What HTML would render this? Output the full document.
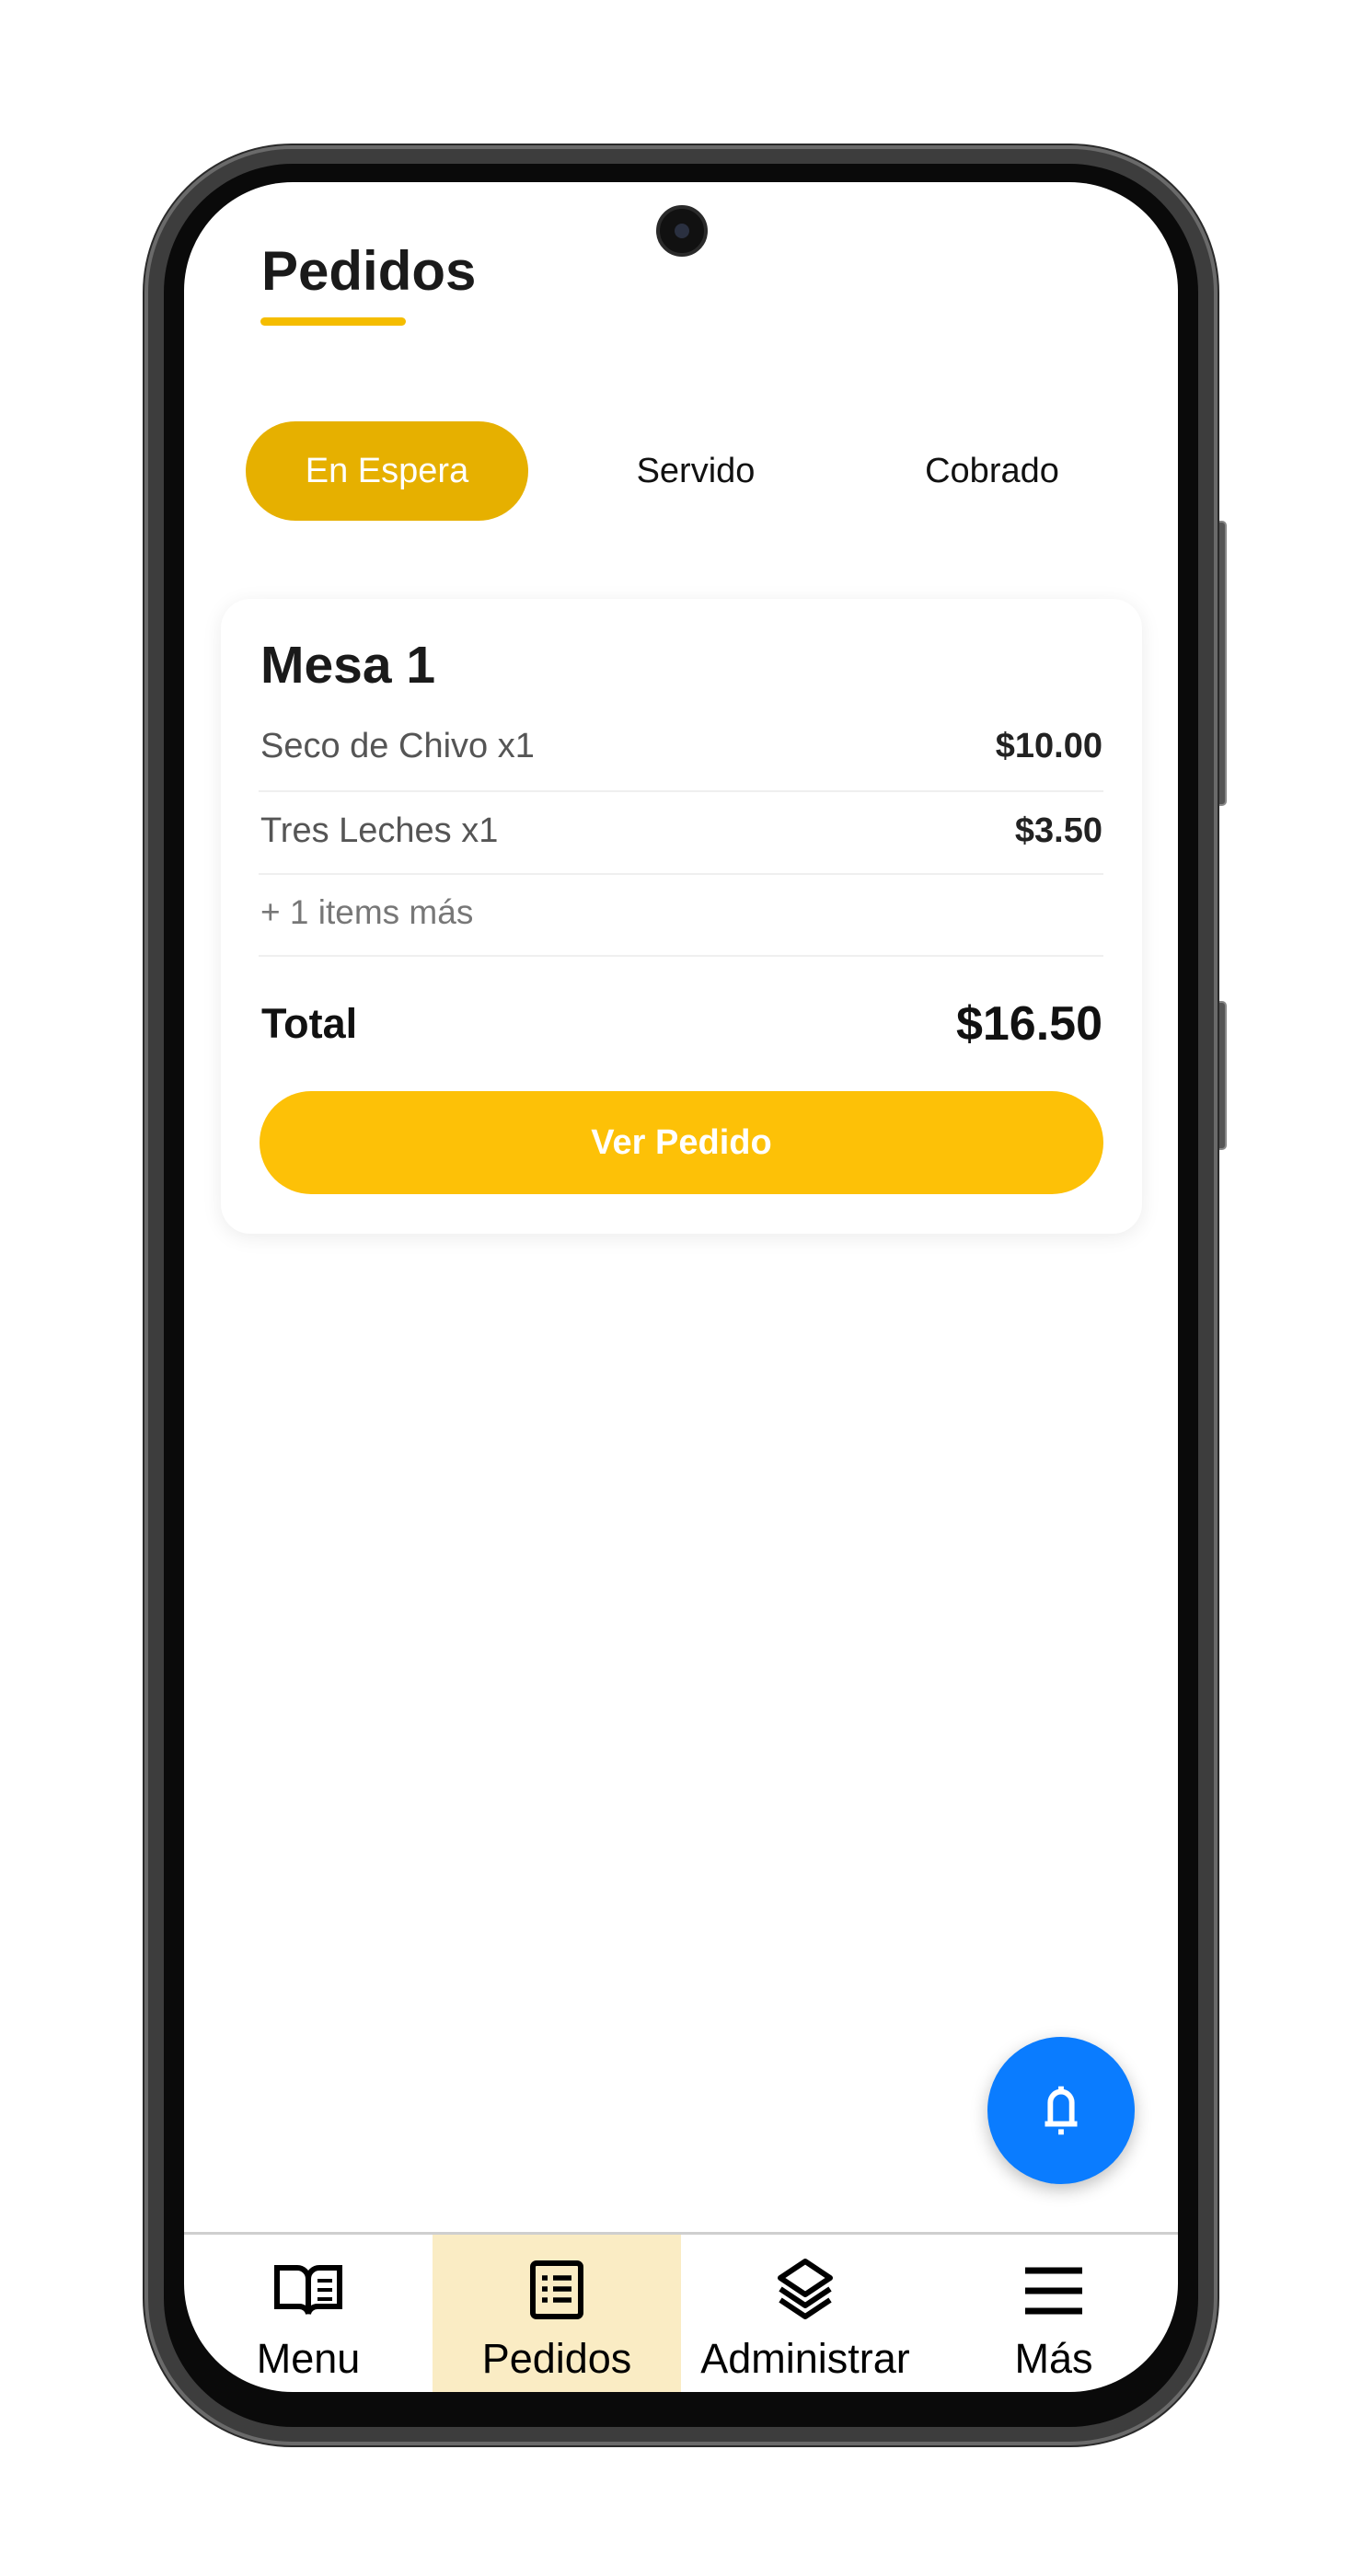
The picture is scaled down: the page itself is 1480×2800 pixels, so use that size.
<!DOCTYPE html>
<html><head><meta charset="utf-8"><style>
*{margin:0;padding:0;box-sizing:border-box}
body{width:1480px;height:2800px;background:#fff;position:relative;font-family:"Liberation Sans",Arial,sans-serif;overflow:hidden}
.abs{position:absolute}
.frame{left:157px;top:158px;width:1166px;height:2500px;border-radius:160px;background:#3d3d3d;border:4px solid #6a6a6a;box-shadow:0 0 0 2px #2a2a2a}
.bezel{left:178px;top:178px;width:1124px;height:2460px;border-radius:140px;background:#0a0a0a}
.screen{left:200px;top:198px;width:1080px;height:2402px;border-radius:118px;background:#fff;overflow:hidden}
.t{position:absolute;white-space:nowrap}
</style></head><body>
<div class="abs" style="left:1319px;top:566px;width:14px;height:310px;background:#555;border-radius:0 5px 5px 0;border:2px solid #888"></div>
<div class="abs" style="left:1319px;top:1088px;width:14px;height:162px;background:#555;border-radius:0 5px 5px 0;border:2px solid #888"></div>
<div class="abs" style="left:155px;top:445px;width:10px;height:28px;background:#999"></div>
<div class="abs" style="left:155px;top:1030px;width:10px;height:28px;background:#999"></div>
<div class="abs frame"></div>
<div class="abs bezel"></div>
<div class="abs screen">
  <div class="t" style="left:84px;top:62px;font-size:60px;font-weight:bold;color:#1a1a1a">Pedidos</div>
  <div class="abs" style="left:83px;top:147px;width:158px;height:9px;border-radius:5px;background:#f5bd00"></div>
  <div class="abs" style="left:67px;top:260px;width:307px;height:108px;border-radius:54px;background:#e6b000"></div>
  <div class="t" style="left:67px;top:260px;width:307px;line-height:108px;text-align:center;font-size:38px;color:#fff">En Espera</div>
  <div class="t" style="left:456px;top:260px;width:200px;line-height:108px;text-align:center;font-size:38px;color:#111">Servido</div>
  <div class="t" style="left:778px;top:260px;width:200px;line-height:108px;text-align:center;font-size:38px;color:#111">Cobrado</div>

  <div class="abs" style="left:40px;top:453px;width:1001px;height:690px;border-radius:32px;background:#fff;box-shadow:0 4px 22px rgba(0,0,0,0.08)"></div>
  <div class="t" style="left:83px;top:492px;font-size:57px;font-weight:bold;color:#1a1a1a">Mesa 1</div>
  <div class="t" style="left:83px;top:592px;font-size:38px;color:#555">Seco de Chivo x1</div>
  <div class="t" style="right:82px;top:592px;font-size:38px;font-weight:bold;color:#222">$10.00</div>
  <div class="abs" style="left:81px;top:661px;width:918px;height:2px;background:#efefef"></div>
  <div class="t" style="left:83px;top:684px;font-size:38px;color:#555">Tres Leches x1</div>
  <div class="t" style="right:82px;top:684px;font-size:38px;font-weight:bold;color:#222">$3.50</div>
  <div class="abs" style="left:81px;top:751px;width:918px;height:2px;background:#efefef"></div>
  <div class="t" style="left:83px;top:773px;font-size:37px;color:#777">+ 1 items más</div>
  <div class="abs" style="left:81px;top:840px;width:918px;height:2px;background:#efefef"></div>
  <div class="t" style="left:84px;top:889px;font-size:45px;font-weight:bold;color:#111">Total</div>
  <div class="t" style="right:82px;top:885px;font-size:52px;font-weight:bold;color:#111">$16.50</div>
  <div class="abs" style="left:82px;top:988px;width:917px;height:112px;border-radius:56px;background:#fdc107"></div>
  <div class="t" style="left:82px;top:988px;width:917px;line-height:112px;text-align:center;font-size:38px;font-weight:bold;color:#fff">Ver Pedido</div>

  <div class="abs" style="left:873px;top:2016px;width:160px;height:160px;border-radius:50%;background:#0a7cff;box-shadow:0 6px 18px rgba(0,0,0,0.25)"></div>
  <svg class="abs" style="left:918px;top:2061px" width="70" height="70" viewBox="0 0 24 24" fill="none" stroke="#fff" stroke-width="2" stroke-linejoin="round"><path d="M12 3v1.5M8 17V9a4 4 0 0 1 8 0v8M6 17h12M11 20h2"/></svg>

  <div class="abs" style="left:0;top:2228px;width:1080px;height:3px;background:#cfcfcf"></div>
  <div class="abs" style="left:270px;top:2231px;width:270px;height:180px;background:#faecc4"></div>
  <svg class="abs" style="left:97px;top:2259px" width="76" height="64" viewBox="0 0 38 32" fill="none" stroke="#000" stroke-width="3"><path d="M2 4h11a6 6 0 0 1 6 6v19a5 5 0 0 0-5-4H2zM36 4H25a6 6 0 0 0-6 6v19a5 5 0 0 1 5-4h12z"/><path d="M24 11h8M24 16h8M24 21h8" stroke-width="2"/></svg>
  <svg class="abs" style="left:375px;top:2258px" width="60" height="66" viewBox="0 0 30 33" fill="none" stroke="#000" stroke-width="3"><rect x="2" y="2" width="26" height="29" rx="2"/><path d="M7 10h3M13 10h10M7 16h3M13 16h10M7 22h3M13 22h10" stroke-width="2.8"/></svg>
  <svg class="abs" style="left:640px;top:2256px" width="70" height="68" viewBox="0 0 35 34" fill="none" stroke="#000" stroke-width="3" stroke-linejoin="round"><path d="M17.5 2L31 11 17.5 20 4 11z"/><path d="M4 17l13.5 9L31 17M4 23l13.5 9L31 23"/></svg>
  <svg class="abs" style="left:914px;top:2264px" width="62" height="56" viewBox="0 0 31 28" stroke="#000" stroke-width="3.5"><path d="M0 3h31M0 14h31M0 25h31"/></svg>
  <div class="t" style="left:0;top:2340px;width:270px;text-align:center;font-size:45px;color:#000">Menu</div>
  <div class="t" style="left:270px;top:2340px;width:270px;text-align:center;font-size:45px;color:#000">Pedidos</div>
  <div class="t" style="left:540px;top:2340px;width:270px;text-align:center;font-size:45px;color:#000">Administrar</div>
  <div class="t" style="left:810px;top:2340px;width:270px;text-align:center;font-size:45px;color:#000">Más</div>
</div>
<div class="abs" style="left:713px;top:223px;width:56px;height:56px;border-radius:50%;background:#111;border:4px solid #2a2a2a"></div>
<div class="abs" style="left:733px;top:243px;width:16px;height:16px;border-radius:50%;background:#2a3040"></div>
</body></html>
